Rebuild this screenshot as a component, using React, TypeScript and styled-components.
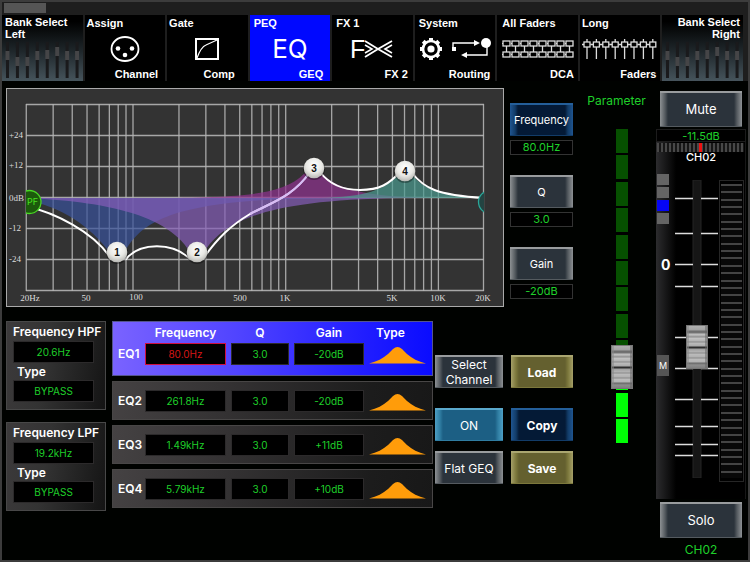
import React, { useState } from 'react';
import styled, { createGlobalStyle, css } from 'styled-components';

const GlobalStyle = createGlobalStyle`
  *, *::before, *::after { box-sizing: border-box; }
  body {
    margin: 0;
    background: #000200;
    color: #fff;
    font-family: Inter, "Liberation Sans", sans-serif;
  }
  button { font: inherit; color: inherit; margin: 0; padding: 0; border: 0; cursor: pointer; }
`;

const GREEN = '#1fd02a';

/* ---------- shell ---------- */

const Shell = styled.div`
  min-height: 100vh;
  display: flex;
  flex-direction: column;
  border: 2px solid #3c3c3c;
  background: #000200;
`;

const StatusStrip = styled.header`
  height: 13px;
  padding: 1px 2px;
  background: #1e1e1e;
`;

const StatusChip = styled.div`
  width: 42px;
  height: 10px;
  background: #555;
`;

const Nav = styled.nav`
  display: grid;
  grid-template-columns: repeat(9, minmax(0, 1fr));
  gap: 2px;
  padding-right: 5px;
  background: #1e1e1e;
`;

const tabBase = css`
  display: flex;
  flex-direction: column;
  height: 66px;
  overflow: hidden;
`;

const Tab = styled.button<{ $active?: boolean }>`
  ${tabBase}
  && { font: bold 11px/12px "Liberation Sans", Arial, sans-serif; }
  padding: 2px 0 1px;
  background: ${(p) => (p.$active ? '#0008ff' : '#000')};
`;

const TabTitle = styled.span<{ $inset: number }>`
  padding-left: ${(p) => p.$inset}px;
  text-align: left;
`;

const TabArt = styled.span`
  flex: 1;
  align-self: stretch;
  display: flex;
  align-items: center;
  justify-content: center;
`;

const TabSub = styled.span<{ $inset: number }>`
  align-self: flex-end;
  padding-right: ${(p) => p.$inset}px;
`;

const EqWord = styled.span`
  font: 26px/28px Inter, sans-serif;
`;

const BankTab = styled.button<{ $right?: boolean }>`
  ${tabBase}
  && { font: bold 11px/12px "Liberation Sans", Arial, sans-serif; }
  padding: 1px 3px 0;
  text-align: ${(p) => (p.$right ? 'right' : 'left')};
  background: linear-gradient(#000 10%, #1f272b 55%, #46545c 100%);
  justify-content: space-between;
  align-items: stretch;
`;

/* ---------- work area ---------- */

const Work = styled.main`
  flex: 1;
  display: grid;
  grid-template-columns: minmax(0, 1fr) 83px 90px;
  padding: 0 2px 0 4px;
`;

const Center = styled.div`
  display: flex;
  flex-direction: column;
  gap: 14px;
  padding-top: 7px;
`;

const TopRow = styled.div`
  display: flex;
  align-items: flex-start;
  gap: 6px;
`;

const ChartPanel = styled.section`
  flex: 1;
  min-width: 0;
  display: flex;
  background: #333;
  svg { width: 100%; height: auto; }
`;

const ParamColumn = styled.div`
  width: 63px;
  padding-top: 15px;
  display: flex;
  flex-direction: column;
  gap: 20px;
`;

const ParamGroup = styled.div`
  display: flex;
  flex-direction: column;
  gap: 4px;
`;

const Readout = styled.output`
  height: 15px;
  border: 1px solid #333;
  background: #000;
  color: ${GREEN};
  font-size: 11px;
  line-height: 13px;
  text-align: center;
`;

type Tone = 'grey' | 'navy' | 'teal' | 'olive';
const tones: Record<Tone, [string, string, string, string]> = {
  grey: ['#8d9194', '#555b60', '#2b333b', '#999c9e'],
  navy: ['#1f5590', '#123c68', '#041a36', '#245f9a'],
  teal: ['#4d9fc4', '#2f7da2', '#1c5f84', '#5aa9cc'],
  olive: ['#a5a068', '#7c783c', '#64602f', '#aaa670'],
};

const BevelButton = styled.button<{ $tone?: Tone; $bold?: boolean; $tall?: boolean }>`
  ${(p) => {
    const [edge, mid, face, rim] = tones[p.$tone ?? 'grey'];
    return css`
      background: linear-gradient(90deg, ${edge} 0, ${mid} 5px, ${face} 8px, ${face} calc(100% - 8px), ${mid} calc(100% - 5px), ${edge} 100%);
      && { border: 0; border-top: 2px solid ${rim}; border-bottom: 1px solid ${mid}; }
    `;
  }}
  height: ${(p) => (p.$tall ? 36 : 33)}px;
  && {
    font-size: ${(p) => (p.$tall ? 13 : 12)}px;
    line-height: 15px;
    font-weight: ${(p) => (p.$bold ? 700 : 400)};
  }
  white-space: nowrap;
`;

const ParamButton = styled(BevelButton)`
  && { font-size: 11px; }
`;

const BottomRow = styled.div`
  display: flex;
  align-items: flex-start;
`;

const Filters = styled.div`
  width: 100px;
  margin-right: 6px;
  display: flex;
  flex-direction: column;
  gap: 12px;
`;

const FilterPanel = styled.section`
  display: flex;
  flex-direction: column;
  height: 89px;
  padding: 0 6px;
  border: 1px solid #484848;
  background: linear-gradient(100deg, #3c3a3b 0%, #333 40%, #141414 100%);
`;

const FilterTitle = styled.h2<{ $indent?: boolean }>`
  margin: 0;
  padding-left: ${(p) => (p.$indent ? 4 : 0)}px;
  font-size: 12px;
  line-height: ${(p) => (p.$indent ? 17 : 19)}px;
  font-weight: 600;
  white-space: nowrap;
`;

const ValueCell = styled.button<{ $hot?: boolean; $narrow?: boolean }>`
  display: block;
  width: ${(p) => (p.$narrow ? '81px' : '100%')};
  height: 22px;
  background: #000;
  && {
    border: 1px solid ${(p) => (p.$hot ? '#d01040' : '#2c2a2b')};
    color: ${(p) => (p.$hot ? '#d81616' : GREEN)};
    font-size: 10px;
    line-height: 18px;
  }
`;

const BandTable = styled.table`
  flex: 1;
  min-width: 0;
  display: block;
  thead, tbody { display: flex; flex-direction: column; gap: 5px; }
  th, td { padding: 0; display: block; }
`;

const rowGrid = css`
  display: grid;
  grid-template-columns: 22px 81fr 58fr 70fr 57px;
  column-gap: 5px;
  padding: 0 6px 0 5px;
`;

const activeFill = 'linear-gradient(90deg, #7a63ff 0%, #4f43ff 40%, #1f1cff 80%, #0a0cff 100%)';

const HeadRow = styled.tr`
  ${rowGrid}
  height: 22px;
  border: 1px solid #55558c;
  border-bottom: 0;
  background: ${activeFill};
  th { font-size: 12px; line-height: 21px; font-weight: 600; }
  th:last-child { text-align: left; padding-left: 7px; }
`;

const BandRow = styled.tr<{ $active?: boolean }>`
  ${rowGrid}
  align-items: ${(p) => (p.$active ? 'start' : 'center')};
  height: ${(p) => (p.$active ? 33 : 39)}px;
  border: 1px solid ${(p) => (p.$active ? '#55558c' : '#484646')};
  ${(p) => p.$active && 'border-top: 0;'}
  background: ${(p) => (p.$active ? activeFill : 'linear-gradient(100deg, #454243 0%, #343233 35%, #1c1c1c 80%, #181818 100%)')};
`;

const BandName = styled.th`
  font-size: 12px;
  line-height: 22px;
  font-weight: 600;
  text-align: left;
  white-space: nowrap;
`;

const ShapeCell = styled.td`
  height: 22px;
  svg { display: block; margin-top: 3px; }
`;

const Actions = styled.div`
  display: grid;
  grid-template-columns: 68px 62px;
  grid-template-rows: 53px 43px 33px;
  column-gap: 8px;
  align-items: start;
  padding: 34px 0 0 2px;
`;

/* ---------- faders ---------- */

const ParameterColumn = styled.section`
  display: flex;
  flex-direction: column;
  align-items: center;
  gap: 20px;
  padding: 11px 0 0 4px;
`;

const ParameterLabel = styled.label`
  color: ${GREEN};
  font-size: 12px;
  line-height: 17px;
`;

const cap = css`
  appearance: none;
  width: 22px;
  height: 44px;
  border: 1px solid #777;
  border-radius: 0;
  background: linear-gradient(
    #b0b0b0 0, #a2a2a2 4px, #6c6c6c 5px, #747474 7px,
    #c4c4c4 8px, #aaa 10px, #888 11px, #c4c4c4 12px, #b2b2b2 15px, #888 16px, #bcbcbc 17px, #aaa 20px,
    #2e2e2e 21px, #2e2e2e 22px, #a0a0a0 23px, #b4b4b4 26px, #888 27px, #bcbcbc 28px, #b0b0b0 31px,
    #888 32px, #bcbcbc 33px, #b4b4b4 36px, #686868 37px, #8d8d8d 39px, #808080 42px
  );
  box-shadow: inset 2px 0 #8888, inset -2px 0 #6668;
`;

const VerticalRange = styled.input`
  appearance: none;
  writing-mode: vertical-lr;
  direction: rtl;
  width: 22px;
  margin: 0;
  background: transparent;
  &::-webkit-slider-runnable-track { width: 22px; height: 100%; background: transparent; }
  &::-webkit-slider-thumb { ${cap} }
`;

const SegmentRange = styled(VerticalRange)`
  height: 314px;
  margin-left: 10px;
  background:
    repeating-linear-gradient(#0000 0 24px, #000 24px 8.4%) center / 12px 100% no-repeat,
    linear-gradient(#065000 0 75%, #00ff06 75%) center / 12px 100% no-repeat;
`;

const Strip = styled.aside`
  display: flex;
  flex-direction: column;
  padding-top: 10px;
`;

const StripButton = styled(BevelButton)`
  margin: 0 4px;
`;

const StripPanel = styled.div`
  margin: 2px 0 3px;
  height: 370px;
  box-shadow: inset -1px 0 #181818;
  background: linear-gradient(90deg, #2c2c2e 0, #050505 18px, #000 20px);
`;

const StripLevel = styled.output`
  display: block;
  height: 13px;
  border: 1px solid #1c1c1c;
  background: #000;
  color: ${GREEN};
  font-size: 11px;
  line-height: 12px;
  text-align: center;
`;

const Pan = styled.div`
  height: 9px;
  margin: 1px 2px 0 1px;
  background:
    linear-gradient(#f01010, #f01010) center / 3px 100% no-repeat,
    repeating-linear-gradient(90deg, #484848 0 2px, #161616 2px 4px);
`;

const StripName = styled.div`
  font-size: 11px;
  line-height: 10px;
  font-weight: 500;
  text-align: center;
`;

const FaderArea = styled.div`
  display: grid;
  grid-template-columns: 19px 44px 25px;
  padding-top: 11px;
  height: 334px;
`;

const Markers = styled.div`
  display: flex;
  flex-direction: column;
  gap: 2px;
  padding-top: 1px;
`;

const Marker = styled.span<{ $on?: boolean }>`
  width: 12px;
  height: 11px;
  margin-left: 1px;
  background: ${(p) => (p.$on ? '#0505f5' : '#646464')};
`;

const ZeroMark = styled.span`
  margin-top: 31px;
  padding-left: 5px;
  font-size: 14px;
  line-height: 16px;
  font-weight: 700;
`;

const MuteMark = styled.span`
  width: 12px;
  height: 21px;
  margin: 80px 0 0 1px;
  background: #555;
  font-size: 9px;
  line-height: 22px;
  text-align: center;
`;

const Throw = styled.div`
  display: grid;
  justify-items: center;
  align-content: start;
  padding-top: 7px;
  & > * { grid-area: 1 / 1; }
`;

const ChannelRange = styled(VerticalRange)`
  height: 298px;
`;

const Meter = styled.div`
  height: 302px;
  margin-top: 7px;
  padding: 3px 1px;
  border: 1px solid #262626;
  background: repeating-linear-gradient(#444 0 2px, #080808 2px 2.5%) content-box;
`;

const StripFooter = styled.div`
  padding-top: 2px;
  color: ${GREEN};
  font-size: 12px;
  line-height: 20px;
  text-align: center;
`;

/* ---------- drawings ---------- */

function BankArt() {
  const caps = [10, 16, 16, 10, 9, 6, 10, 10];
  return (
    <svg viewBox="3 0 75 40" height="40" width="100%" preserveAspectRatio="none" aria-hidden="true">
      {caps.map((y, i) => (
        <g key={i}>
          <rect x={4 + i * 10} y="1" width="3" height="36" fill="#1a1a1c" />
          <rect x={3.5 + i * 10} y={y} width="4" height="9" fill="#454547" />
        </g>
      ))}
    </svg>
  );
}

const XlrIcon = () => (
  <svg width="30" height="28" viewBox="0 0 30 28" fill="none" aria-hidden="true">
    <ellipse cx="15" cy="14" rx="13.5" ry="12" stroke="#fff" strokeWidth="1.8" />
    <circle cx="8" cy="13.5" r="2.3" fill="#fff" />
    <circle cx="22" cy="13.5" r="2.3" fill="#fff" />
    <circle cx="15" cy="20" r="2.3" fill="#fff" />
  </svg>
);

const CompIcon = () => (
  <svg width="26" height="24" viewBox="0 0 26 24" fill="none" stroke="#fff" aria-hidden="true">
    <rect x="2" y="2" width="22" height="20" strokeWidth="2" />
    <path d="M3 21 Q7 10 12 8 L23 3" strokeWidth="1.2" />
  </svg>
);

const FxIcon = () => (
  <svg width="44" height="30" viewBox="0 -3 44 30" fill="none" stroke="#fff" aria-hidden="true">
    <text x="0" y="21" fill="#fff" stroke="none" fontFamily="Liberation Sans, Arial, sans-serif" fontSize="25" fontWeight="400">F</text>
    <path d="M15 4 L28 12 L15 20 M42 4 L28 12 L42 20" strokeWidth="1.8" />
    <path d="M15 8 L22 12 L15 16 M42 8 L35 12 L42 16" strokeWidth="1.6" />
  </svg>
);

const SystemIcon = () => (
  <svg width="74" height="24" viewBox="0 0 74 24" fill="none" stroke="#fff" aria-hidden="true">
    <circle cx="13" cy="12" r="8" strokeWidth="2.6" />
    <circle cx="13" cy="12" r="3.6" fill="#fff" stroke="none" />
    {[0, 45, 90, 135, 180, 225, 270, 315].map((a) => (
      <rect key={a} x="11" y="1" width="4" height="3.4" fill="#fff" stroke="none" transform={`rotate(${a} 13 12)`} />
    ))}
    <rect x="34" y="10" width="4" height="4" fill="#fff" stroke="none" />
    <path d="M35 11 V6 H58 M69 8 V18 H48" strokeWidth="1.4" />
    <path d="M56 3 L62 6 L56 9 Z M49 15 L43 18 L49 21 Z" fill="#fff" stroke="none" />
    <circle cx="68" cy="6" r="5" fill="#fff" stroke="none" />
  </svg>
);

const DcaIcon = () => (
  <svg width="72" height="20" viewBox="0 0 72 20" fill="none" stroke="#ddd" aria-hidden="true">
    {Array.from({ length: 8 }, (_, i) => (
      <g key={i} strokeWidth="1.3">
        <rect x={1 + i * 9} y="2" width="7" height="5" />
        <path d={`M${4.5 + i * 9} 7 V13`} />
        <rect x={1 + i * 9} y="13" width="7" height="5" />
      </g>
    ))}
    <path d="M0 4.5 H72 M0 15.5 H72" strokeWidth="1" strokeDasharray="1 8" />
  </svg>
);

const LongIcon = () => (
  <svg width="76" height="22" viewBox="0 0 76 22" fill="none" stroke="#ddd" aria-hidden="true">
    {Array.from({ length: 8 }, (_, i) => (
      <g key={i} strokeWidth="1.3">
        <path d={`M${5 + i * 9.4} 1 V4 M${5 + i * 9.4} 9 V21 M${i * 9.4 - 1} 6.5 H${2 + i * 9.4}`} />
        <rect x={2 + i * 9.4} y="4" width="6" height="5" />
      </g>
    ))}
  </svg>
);

const PeakShape = () => (
  <svg width="57" height="18" viewBox="0 0 57 18" aria-label="Peak filter" role="img">
    <path d="M0 17.5 C8 15.5 14 12.5 19 8 L24 3 Q28.5 -1 33 3 L38 8 C43 12.5 49 15.5 57 17.5 Z" fill="#ff9c0a" />
  </svg>
);

const freqX = (f: number) => Math.min(133 + 152.7 * Math.log10(f / 100), 483.5);
const gridFreqs = [...new Set([1, 10, 100, 1000]
  .flatMap((m) => [20, 30, 40, 50, 60, 70, 80, 90, 100].map((f) => f * m)))]
  .filter((f) => f <= 20000);
const gridLevels = [104.5, 135.5, 166.5, 197.5, 228.5, 259.5, 290.5];

const bands = [
  { fill: '#37519b', d: 'M26 198 V200 C62 207 90 226 110 253 L117 258 L124 253 C142 222 170 198 340 198 Z' },
  { fill: '#845cb8', d: 'M26 198 C90 201 165 210 190 252 L197 257 L204 252 C224 222 262 200 400 198 Z' },
  { fill: '#903290', d: 'M150 198 C250 198 285 194 306 172 L314 166 L321 172 C336 190 365 196 430 198 Z' },
  { fill: '#4a9b90', d: 'M320 198 C365 197 385 190 399 174 L405 168 L411 174 C425 190 440 196 484 198 Z' },
];

const response =
  'M26 206 C55 213 92 231 110 257 L117 260 L126 259 C140 242 173 242 190 259 L197 260 L205 256 ' +
  'C218 238 230 226 250 214 C275 201 293 196 310 172 L314 168 L320 172 C330 185 343 190 360 190 ' +
  'C380 190 389 184 400 172 L405 170 L412 173 C424 188 436 195 484 198';

const handles: [number, number][] = [[117, 252], [197, 252], [314, 168], [405, 171]];
const levelLabels: [string, number][] = [['+24', 138], ['+12', 168], ['0dB', 201], ['-12', 231], ['-24', 262]];
const freqLabels: [string, number, number][] = [
  ['20Hz', 30, 301], ['50', 86, 301], ['100', 136, 300], ['500', 240, 301],
  ['1K', 285, 301], ['5K', 392, 301], ['10K', 438, 301], ['20K', 483, 301],
];

const EqChart = () => (
  <svg viewBox="6 88 498 219" role="img" aria-label="Equalizer response">
    <defs>
      <radialGradient id="ball" cx="50%" cy="35%" r="65%">
        <stop offset="0" stopColor="#fff" />
        <stop offset="0.6" stopColor="#e8e8e4" />
        <stop offset="1" stopColor="#b8b8b4" />
      </radialGradient>
      <clipPath id="plot"><rect x="26" y="104" width="458" height="187" /></clipPath>
    </defs>
    <rect x="6.5" y="88.5" width="497" height="218" fill="#333" stroke="#aaa" />
    <g stroke="#b4b4b4" strokeOpacity="0.9" strokeWidth="1.3">
      {gridLevels.map((y) => <path key={y} d={`M26 ${y} H484`} />)}
      {gridFreqs.map((f) => <path key={f} d={`M${freqX(f)} 104 V291`} />)}
    </g>
    <g clipPath="url(#plot)">
      {bands.map((b) => <path key={b.fill} d={b.d} fill={b.fill} fillOpacity="0.7" />)}
      <path d={response} fill="none" stroke="#fff" strokeWidth="2" />
      <path d="M250 214 C275 201 293 196 310 172" fill="none" stroke="#cdaaf2" strokeOpacity="0.8" strokeWidth="2" />
      <circle cx="29.5" cy="202" r="11.5" fill="#1c5a0c" stroke="#49d824" strokeWidth="1.3" />
      <text x="27" y="205" fill="#49e020" fontSize="9" fontFamily="Inter, sans-serif">PF</text>
      <circle cx="490" cy="202" r="11.5" fill="#234442" stroke="#2aa89a" strokeWidth="1.3" />
    </g>
    {handles.map(([x, y], i) => (
      <g key={i}>
        <circle cx={x} cy={y + 1} r="11" fill="#000" fillOpacity="0.35" />
        <circle cx={x} cy={y} r="10.3" fill="url(#ball)" />
        <text x={x} y={y + 4} textAnchor="middle" fill="#111" fontSize="10" fontWeight="700" fontFamily="Liberation Sans, Arial, sans-serif">{i + 1}</text>
      </g>
    ))}
    <g fill="#ddd" fontFamily="Liberation Serif, Times New Roman, serif" fontSize="9">
      {levelLabels.map(([t, y]) => <text key={t} x="9" y={y}>{t}</text>)}
      {freqLabels.map(([t, x, y]) => <text key={t} x={x} y={y} textAnchor="middle">{t}</text>)}
    </g>
  </svg>
);

const ScaleTicks = () => (
  <svg width="44" height="298" viewBox="0 0 44 298" aria-hidden="true">
    <rect x="18" y="0" width="8" height="298" fill="#161616" stroke="#242424" />
    {[18, 53, 84, 106, 157, 188, 219, 246, 264, 275].map((y) => (
      <path key={y} d={`M0 ${y + 0.5} H18 M26 ${y + 0.5} H43`} stroke="#ddd" strokeWidth="1.6" />
    ))}
  </svg>
);

/* ---------- data ---------- */

const tabs = [
  { title: 'Assign', sub: 'Channel', left: 2, right: 7, art: <XlrIcon /> },
  { title: 'Gate', sub: 'Comp', left: 2, right: 13, art: <CompIcon /> },
  { title: 'PEQ', sub: 'GEQ', left: 4, right: 7, art: <EqWord>EQ</EqWord> },
  { title: 'FX 1', sub: 'FX 2', left: 4, right: 5, art: <FxIcon /> },
  { title: 'System', sub: 'Routing', left: 4, right: 5, art: <SystemIcon /> },
  { title: 'All Faders', sub: 'DCA', left: 5, right: 4, art: <DcaIcon /> },
  { title: 'Long', sub: 'Faders', left: 2, right: 4, art: <LongIcon /> },
];

const params = [
  { name: 'Frequency', value: '80.0Hz' },
  { name: 'Q', value: '3.0' },
  { name: 'Gain', value: '-20dB' },
];

const filters = [
  { name: 'Frequency HPF', freq: '20.6Hz', type: 'BYPASS' },
  { name: 'Frequency LPF', freq: '19.2kHz', type: 'BYPASS' },
];

const eqRows = [
  { name: 'EQ1', freq: '80.0Hz', q: '3.0', gain: '-20dB' },
  { name: 'EQ2', freq: '261.8Hz', q: '3.0', gain: '-20dB' },
  { name: 'EQ3', freq: '1.49kHz', q: '3.0', gain: '+11dB' },
  { name: 'EQ4', freq: '5.79kHz', q: '3.0', gain: '+10dB' },
];

export default function App() {
  const [param, setParam] = useState('Frequency');
  return (
    <Shell>
      <GlobalStyle />
      <StatusStrip><StatusChip /></StatusStrip>
      <Nav>
        <BankTab><span>Bank Select<br />Left</span><BankArt /></BankTab>
        {tabs.map((t) => (
          <Tab key={t.title} $active={t.title === 'PEQ'}>
            <TabTitle $inset={t.left}>{t.title}</TabTitle>
            <TabArt>{t.art}</TabArt>
            <TabSub $inset={t.right}>{t.sub}</TabSub>
          </Tab>
        ))}
        <BankTab $right><span>Bank Select<br />Right</span><BankArt /></BankTab>
      </Nav>
      <Work>
        <Center>
          <TopRow>
            <ChartPanel><EqChart /></ChartPanel>
            <ParamColumn>
              {params.map((p) => (
                <ParamGroup key={p.name}>
                  <ParamButton $tone={p.name === param ? 'navy' : 'grey'} onClick={() => setParam(p.name)}>{p.name}</ParamButton>
                  <Readout>{p.value}</Readout>
                </ParamGroup>
              ))}
            </ParamColumn>
          </TopRow>
          <BottomRow>
            <Filters>
              {filters.map((f) => (
                <FilterPanel key={f.name}>
                  <FilterTitle>{f.name}</FilterTitle>
                  <ValueCell $narrow>{f.freq}</ValueCell>
                  <FilterTitle $indent>Type</FilterTitle>
                  <ValueCell $narrow>{f.type}</ValueCell>
                </FilterPanel>
              ))}
            </Filters>
            <BandTable>
              <thead>
                <HeadRow>
                  <th aria-label="Band" />
                  <th scope="col">Frequency</th>
                  <th scope="col">Q</th>
                  <th scope="col">Gain</th>
                  <th scope="col">Type</th>
                </HeadRow>
              </thead>
              <tbody>
                {eqRows.map((r, i) => (
                  <BandRow key={r.name} $active={i === 0}>
                    <BandName scope="row">{r.name}</BandName>
                    <td><ValueCell $hot={i === 0}>{r.freq}</ValueCell></td>
                    <td><ValueCell>{r.q}</ValueCell></td>
                    <td><ValueCell>{r.gain}</ValueCell></td>
                    <ShapeCell><PeakShape /></ShapeCell>
                  </BandRow>
                ))}
              </tbody>
            </BandTable>
            <Actions>
              <BevelButton>Select<br />Channel</BevelButton>
              <BevelButton $tone="olive" $bold>Load</BevelButton>
              <BevelButton $tone="teal">ON</BevelButton>
              <BevelButton $tone="navy" $bold>Copy</BevelButton>
              <BevelButton>Flat GEQ</BevelButton>
              <BevelButton $tone="olive" $bold>Save</BevelButton>
            </Actions>
          </BottomRow>
        </Center>
        <ParameterColumn>
          <ParameterLabel htmlFor="parameter">Parameter</ParameterLabel>
          <SegmentRange id="parameter" type="range" min="0" max="100" defaultValue="20" />
        </ParameterColumn>
        <Strip>
          <StripButton $tall>Mute</StripButton>
          <StripPanel>
            <StripLevel>-11.5dB</StripLevel>
            <Pan />
            <StripName>CH02</StripName>
            <FaderArea>
              <Markers>
                <Marker /><Marker /><Marker $on /><Marker />
                <ZeroMark>0</ZeroMark>
                <MuteMark>M</MuteMark>
              </Markers>
              <Throw>
                <ScaleTicks />
                <ChannelRange type="range" min="0" max="100" defaultValue="43" aria-label="CH02 level" />
              </Throw>
              <Meter />
            </FaderArea>
          </StripPanel>
          <StripButton $tall>Solo</StripButton>
          <StripFooter>CH02</StripFooter>
        </Strip>
      </Work>
    </Shell>
  );
}
